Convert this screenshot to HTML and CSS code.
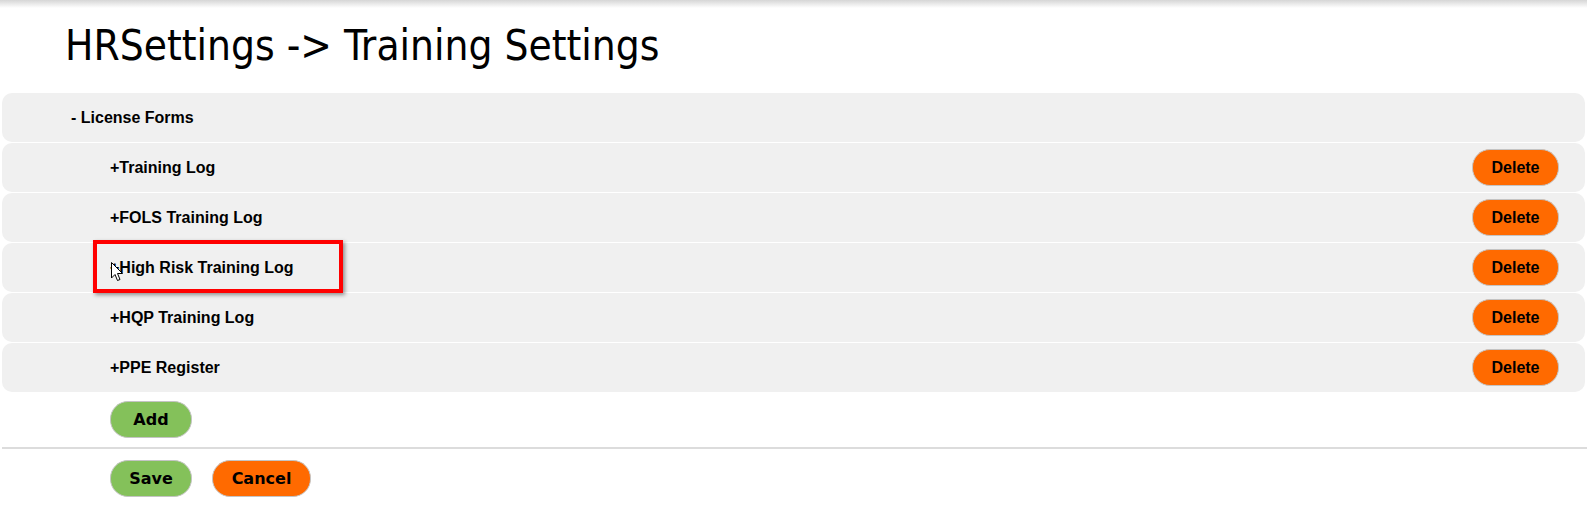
FILE: index.html
```html
<!DOCTYPE html>
<html lang="en">
<head>
    <meta charset="UTF-8">
    <title>HRSettings - Training Settings</title>
    <link rel="stylesheet" href="styles.css">
</head>
<body>
    <div class="top-shadow"></div>
    <h1>HRSettings -&gt; Training Settings</h1>

    <div class="tree">
        <div class="tree-row parent">- License Forms</div>
        <div class="tree-row child">
            <span>+Training Log</span>
            <button class="btn btn-delete">Delete</button>
        </div>
        <div class="tree-row child">
            <span>+FOLS Training Log</span>
            <button class="btn btn-delete">Delete</button>
        </div>
        <div class="tree-row child">
            <span>+High Risk Training Log</span>
            <button class="btn btn-delete">Delete</button>
        </div>
        <div class="tree-row child">
            <span>+HQP Training Log</span>
            <button class="btn btn-delete">Delete</button>
        </div>
        <div class="tree-row child">
            <span>+PPE Register</span>
            <button class="btn btn-delete">Delete</button>
        </div>

        <!-- annotation over the third entry -->
        <div class="highlight"></div>
        <svg class="cursor" width="13" height="20" viewBox="0 0 13 20">
            <path d="M0.5 0.5 L0.5 16 L4 12.5 L6.5 18.5 L9 17.5 L6.5 11.5 L11.5 11.5 Z" fill="#fff" stroke="#000" stroke-width="1"/>
        </svg>
    </div>

    <div class="actions">
        <button class="btn btn-green">Add</button>
    </div>
    <hr class="divider">
    <div class="actions">
        <button class="btn btn-green">Save</button>
        <button class="btn btn-orange">Cancel</button>
    </div>
</body>
</html>
```

FILE: styles.css
```css
body {
    margin: 0;
    font-family: 'Liberation Sans', Arial, sans-serif;
    background-color: #fff;
    color: #000;
}
.top-shadow {
    height: 8px;
    background: linear-gradient(#d6d6d6, rgba(255, 255, 255, 0));
}
h1 {
    font-family: 'DejaVu Sans Condensed', 'DejaVu Sans', sans-serif;
    font-weight: normal;
    font-size: 42px;
    margin: 10px 0 19px 65px;
    line-height: 56px;
}
.tree {
    position: relative;
    margin: 0 2px;
}
.tree-row {
    display: flex;
    align-items: center;
    justify-content: space-between;
    height: 49px;
    margin-bottom: 1px;
    background-color: #f0f0f0;
    border-radius: 10px;
    font-size: 16px;
    font-weight: bold;
    padding-right: 26px;
}
.tree-row.parent {
    padding-left: 69px;
}
.tree-row.child {
    padding-left: 108px;
}
.btn {
    font-weight: bold;
    color: #000;
    border: 1px solid #c4c4c4;
    border-radius: 18px;
    height: 37px;
    cursor: pointer;
}
.btn-delete {
    font-family: 'Liberation Sans', Arial, sans-serif;
    font-size: 16px;
    width: 87px;
    background-color: #ff6a00;
}
.btn-green, .btn-orange {
    font-family: 'DejaVu Sans', Verdana, sans-serif;
    font-size: 16px;
    height: 37px;
}
.btn-green {
    width: 82px;
    background-color: #84c15a;
}
.btn-orange {
    width: 99px;
    background-color: #ff6a00;
    margin-left: 20px;
}
.actions {
    padding-left: 110px;
    display: flex;
}
.tree + .actions {
    margin-top: 9px;
}
.divider {
    margin: 9px 0 11px 2px;
    border: 0;
    height: 2px;
    background-color: #dcdcdc;
}
.highlight {
    position: absolute;
    left: 91px;
    top: 147px;
    width: 242px;
    height: 45px;
    border: 4px solid #f00;
    box-shadow: 2px 2px 4px rgba(0, 0, 0, 0.4);
}
.cursor {
    position: absolute;
    left: 109px;
    top: 169px;
}
```
